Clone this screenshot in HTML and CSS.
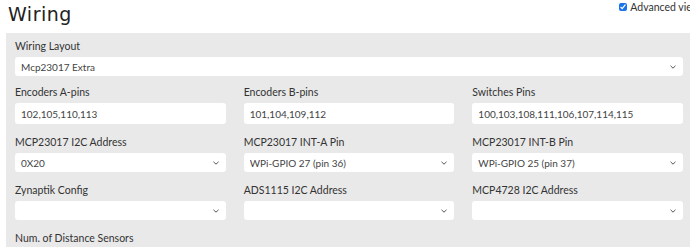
FILE: index.html
```html
<!DOCTYPE html>
<html lang="en">
<head>
    <meta charset="UTF-8">
    <meta name="viewport" content="width=device-width, initial-scale=1.0">
    <title>Wiring</title>
    <link rel="stylesheet" href="styles.css">
</head>
<body>
    <div class="page">
        <div class="header">
            <h1>Wiring</h1>
            <label class="advanced"><input type="checkbox" checked> Advanced view</label>
        </div>
        <div class="panel">
            <div class="field first">
                <label>Wiring Layout</label>
                <select><option>Mcp23017 Extra</option></select>
            </div>
            <div class="row">
                <div class="field">
                    <label>Encoders A-pins</label>
                    <input type="text" value="102,105,110,113">
                </div>
                <div class="field">
                    <label>Encoders B-pins</label>
                    <input type="text" value="101,104,109,112">
                </div>
                <div class="field">
                    <label>Switches Pins</label>
                    <input type="text" value="100,103,108,111,106,107,114,115">
                </div>
            </div>
            <div class="row">
                <div class="field">
                    <label>MCP23017 I2C Address</label>
                    <select><option>0X20</option></select>
                </div>
                <div class="field">
                    <label>MCP23017 INT-A Pin</label>
                    <select><option>WPi-GPIO 27 (pin 36)</option></select>
                </div>
                <div class="field">
                    <label>MCP23017 INT-B Pin</label>
                    <select><option>WPi-GPIO 25 (pin 37)</option></select>
                </div>
            </div>
            <div class="row">
                <div class="field">
                    <label>Zynaptik Config</label>
                    <select><option></option></select>
                </div>
                <div class="field">
                    <label>ADS1115 I2C Address</label>
                    <select><option></option></select>
                </div>
                <div class="field">
                    <label>MCP4728 I2C Address</label>
                    <select><option></option></select>
                </div>
            </div>
            <div class="field">
                <label>Num. of Distance Sensors</label>
            </div>
        </div>
    </div>
</body>
</html>
```
FILE: styles.css
```css
html{
    overflow: hidden;
    background-color: white;
}
body{
    margin: 0;
    font-family: Lato, "Open Sans", sans-serif;
    font-size: 10.5px;
    color: #333;
}
.page{
    width: 686px;
    margin-left: 6px;
}
.header{
    display: flex;
    align-items: flex-start;
    height: 33px;
}
h1{
    font-family: "DejaVu Sans", sans-serif;
    font-weight: normal;
    font-size: 19px;
    letter-spacing: 0.5px;
    color: #222;
    margin: 3px 0 0 2px;
}
.advanced{
    margin-left: auto;
    margin-right: -8px;
    white-space: nowrap;
    font-size: 10.5px;
    color: #333;
    display: flex;
    align-items: center;
    gap: 1px;
    margin-top: 1px;
}
.advanced input{
    width: 8px;
    height: 8px;
    margin: 0 2px 0 0;
    accent-color: #1a73e8;
}
.panel{
    background-color: #e9e9e9;
    padding: 5px 9px 10px 9px;
}
.row{
    display: grid;
    grid-template-columns: 1fr 1fr 1fr;
    gap: 18px;
}
.field{
    display: flex;
    flex-direction: column;
    margin-bottom: 10px;
}
.field.first{
    margin-bottom: 8px;
}
.field label{
    line-height: 16px;
    margin-bottom: 3px;
}
input[type=text], select{
    font-family: Lato, "Open Sans", sans-serif;
    font-size: 10px;
    color: #444;
    background-color: white;
    border: none;
    border-radius: 3px;
    height: 21px;
    padding: 0 6px;
    box-sizing: border-box;
    outline: none;
}
select{
    appearance: none;
    height: 19px;
    background-image: url("data:image/svg+xml,%3Csvg xmlns='http://www.w3.org/2000/svg' width='6' height='4'%3E%3Cpath d='M0.5 0.8 L3 3.2 L5.5 0.8' fill='none' stroke='%23555' stroke-width='1'/%3E%3C/svg%3E");
    background-repeat: no-repeat;
    background-position: right 7px center;
}
```
